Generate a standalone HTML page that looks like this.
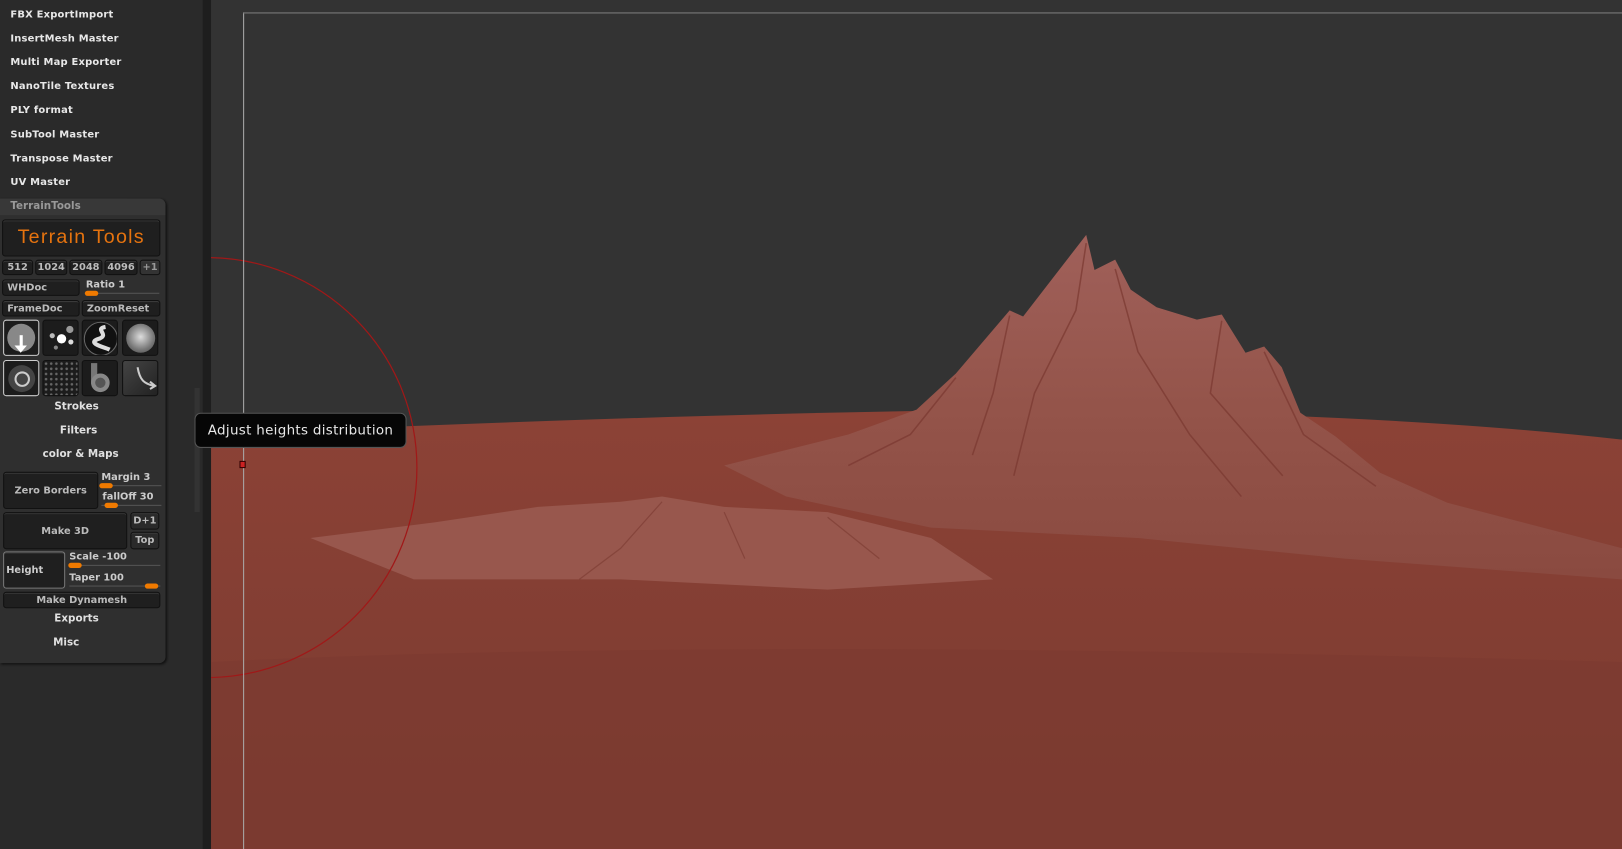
<!DOCTYPE html><html><head><style>
body{margin:0;width:1622px;height:849px;overflow:hidden;background:#2a2a2a;font-family:"DejaVu Sans","Liberation Sans",sans-serif}
#w{position:absolute;left:0;top:0;width:1568px;height:821px;transform:scale(1.0345);transform-origin:0 0}
.m{position:absolute;left:10px;color:#e8e8e8;font-size:9.6px;font-weight:bold;letter-spacing:.2px}
.b{position:absolute;background:#1f1f1f;border:1px solid #111;border-radius:3px;color:#bbb;font-size:9.5px;font-weight:bold;box-sizing:border-box;display:flex;align-items:center;justify-content:center;box-shadow:inset 0 1px 0 #3a3a3a}
.t{position:absolute;color:#e0e0e0;font-size:10px;font-weight:bold;text-align:center}
.sl{position:absolute;color:#ccc;font-size:9.5px;font-weight:bold}
.ln{position:absolute;height:1px;background:#555}
.kn{position:absolute;width:13px;height:5px;border-radius:3px;background:#f07a00}
.ic{position:absolute;width:35px;height:35px;background:#1c1c1c;border:1px solid #111;border-radius:3px;box-sizing:border-box;overflow:hidden}
</style></head><body><div id="w">
<div class="m" style="top:9px">FBX ExportImport</div>
<div class="m" style="top:32px">InsertMesh Master</div>
<div class="m" style="top:55px">Multi Map Exporter</div>
<div class="m" style="top:78px">NanoTile Textures</div>
<div class="m" style="top:101px">PLY format</div>
<div class="m" style="top:125px">SubTool Master</div>
<div class="m" style="top:148px">Transpose Master</div>
<div class="m" style="top:171px">UV Master</div>
<div style="position:absolute;left:0;top:192px;width:160px;height:449px;background:#2f2f2f;border-radius:0 6px 6px 0;box-shadow:1px 1px 2px #111"></div>
<div style="position:absolute;left:0;top:192px;width:160px;height:16px;background:#383838;border-radius:0 6px 0 0"></div>
<div style="position:absolute;left:10px;top:194px;color:#999;font-size:10px;font-weight:bold">TerrainTools</div>
<div class="b" style="left:2px;top:212px;width:153px;height:36px;font-size:19px;font-weight:normal;color:#e5730f;font-family:'Liberation Sans',sans-serif;letter-spacing:1.2px">Terrain Tools</div>
<div class="b" style="left:2px;top:251px;width:30px;height:15px">512</div>
<div class="b" style="left:34px;top:251px;width:31px;height:15px">1024</div>
<div class="b" style="left:67px;top:251px;width:32px;height:15px">2048</div>
<div class="b" style="left:101px;top:251px;width:32px;height:15px">4096</div>
<div class="b" style="left:135px;top:251px;width:20px;height:15px;background:#333;color:#999">+1</div>
<div class="b" style="left:2px;top:270px;width:75px;height:16px;justify-content:flex-start;padding-left:4px">WHDoc</div>
<div class="sl" style="left:83px;top:270px">Ratio 1</div><div class="ln" style="left:82px;top:283px;width:72px"></div><div class="kn" style="left:82px;top:281px"></div>
<div class="b" style="left:2px;top:290px;width:75px;height:16px;justify-content:flex-start;padding-left:4px">FrameDoc</div>
<div class="b" style="left:79px;top:290px;width:76px;height:16px;justify-content:flex-start;padding-left:4px">ZoomReset</div>
<div class="ic" style="left:3px;top:309px;border:1px solid #ccc"><div style="position:absolute;left:3px;top:3px;width:27px;height:27px;border-radius:50%;background:#888"></div><div style="position:absolute;left:15px;top:14px;width:3px;height:14px;background:#fff"></div><div style="position:absolute;left:10px;top:24px;border:6px solid transparent;border-top:7px solid #fff"></div></div>
<div class="ic" style="left:41px;top:309px"><div style="position:absolute;left:13px;top:13px;width:9px;height:9px;border-radius:50%;background:#fff"></div><div style="position:absolute;left:6px;top:12px;width:5px;height:5px;border-radius:50%;background:#bbb"></div><div style="position:absolute;left:22px;top:5px;width:7px;height:7px;border-radius:50%;background:#999"></div><div style="position:absolute;left:24px;top:18px;width:5px;height:5px;border-radius:50%;background:#ddd"></div><div style="position:absolute;left:10px;top:24px;width:4px;height:4px;border-radius:50%;background:#888"></div></div>
<div class="ic" style="left:79px;top:309px"><div style="position:absolute;left:1px;top:1px;width:31px;height:31px;border-radius:50%;background:#111;border:1px solid #666"></div><svg style="position:absolute;left:0;top:0" width="35" height="35"><path d="M22 6 C10 8 28 14 14 18 C4 22 22 26 26 28" stroke="#ddd" stroke-width="4" fill="none"/></svg></div>
<div class="ic" style="left:118px;top:309px"><div style="position:absolute;left:3px;top:3px;width:28px;height:28px;border-radius:50%;background:radial-gradient(circle at 50% 45%,#ddd,#777 60%,#444)"></div></div>
<div class="ic" style="left:3px;top:348px;border:1px solid #ccc"><div style="position:absolute;left:4px;top:4px;width:26px;height:26px;border-radius:50%;background:#444"></div><div style="position:absolute;left:10px;top:10px;width:11px;height:11px;border-radius:50%;border:2px solid #ccc"></div></div>
<div class="ic" style="left:41px;top:348px;background:radial-gradient(circle,#666 1px,transparent 1.5px) 0 0/5px 5px #1c1c1c"></div>
<div class="ic" style="left:79px;top:348px"><div style="position:absolute;left:8px;top:2px;width:6px;height:20px;background:#777"></div><div style="position:absolute;left:8px;top:12px;width:18px;height:18px;border-radius:50%;border:4px solid #888;box-sizing:border-box;background:#555"></div></div>
<div class="ic" style="left:118px;top:348px;background:linear-gradient(135deg,#444,#222)"><svg width="35" height="35"><path d="M14 6 C16 18 20 22 30 24" stroke="#ccc" stroke-width="2" fill="none"/><path d="M26 20 L31 24 L26 27" stroke="#ccc" stroke-width="2" fill="none"/></svg></div>
<div class="t" style="left:0;width:148px;top:388px">Strokes</div>
<div class="t" style="left:0;width:152px;top:411px">Filters</div>
<div class="t" style="left:0;width:156px;top:434px">color &amp; Maps</div>
<div class="b" style="left:3px;top:456px;width:92px;height:36px">Zero Borders</div>
<div class="sl" style="left:98px;top:456px">Margin 3</div><div class="ln" style="left:98px;top:469px;width:58px"></div><div class="kn" style="left:96px;top:467px"></div>
<div class="sl" style="left:99px;top:475px">fallOff 30</div><div class="ln" style="left:98px;top:488px;width:58px"></div><div class="kn" style="left:101px;top:486px"></div>
<div class="b" style="left:3px;top:495px;width:120px;height:36px">Make 3D</div>
<div class="b" style="left:126px;top:495px;width:28px;height:17px;background:#2a2a2a">D+1</div>
<div class="b" style="left:126px;top:514px;width:28px;height:17px;background:#2a2a2a">Top</div>
<div class="b" style="left:3px;top:533px;width:60px;height:36px;border:1px solid #777;justify-content:flex-start;padding-left:2px;color:#ccc">Height</div>
<div class="sl" style="left:67px;top:533px">Scale -100</div><div class="ln" style="left:67px;top:546px;width:88px"></div><div class="kn" style="left:66px;top:544px"></div>
<div class="sl" style="left:67px;top:553px">Taper 100</div><div class="ln" style="left:67px;top:566px;width:88px"></div><div class="kn" style="left:140px;top:564px"></div>
<div class="b" style="left:3px;top:572px;width:152px;height:16px">Make Dynamesh</div>
<div class="t" style="left:0;width:148px;top:593px">Exports</div>
<div class="t" style="left:0;width:128px;top:616px">Misc</div>
<div style="position:absolute;left:196px;top:0;width:8px;height:821px;background:#1e1e1e"></div>
<div style="position:absolute;left:188px;top:375px;width:5px;height:120px;background:#333"></div>
<svg style="position:absolute;left:204px;top:0" width="1364" height="821" viewBox="204 0 1364 821">
<defs><linearGradient id="g" x1="0" y1="0" x2="0" y2="1"><stop offset="0" stop-color="#8c4236"/><stop offset="1" stop-color="#7a3a30"/></linearGradient>
<linearGradient id="mt" x1="0" y1="0" x2="0" y2="1"><stop offset="0" stop-color="#a0605a"/><stop offset=".5" stop-color="#94544a"/><stop offset="1" stop-color="#8a4a40"/></linearGradient></defs>
<rect x="204" width="1364" height="821" fill="#333"/>
<path d="M204 420 Q700 398 1000 396 Q1350 400 1568 425 L1568 821 L204 821Z" fill="url(#g)"/>
<path d="M700 450 L820 420 L886 396 L924 361 L976 300 L989 306 L1050 227 L1058 261 L1078 251 L1093 280 L1118 297 L1157 309 L1181 304 L1204 341 L1222 335 L1239 355 L1257 399 L1291 422 L1334 457 L1399 486 L1568 530 L1568 560 L1300 540 L1100 520 L900 510 L760 480Z" fill="url(#mt)"/>
<g stroke="#7a3830" stroke-width="1.5" fill="none" opacity=".7">
<path d="M1050 235 L1040 300 L1000 380 L980 460"/><path d="M1078 260 L1100 340 L1150 420 L1200 480"/><path d="M976 305 L960 380 L940 440"/><path d="M1181 310 L1170 380 L1240 460"/><path d="M1222 340 L1260 420 L1330 470"/><path d="M924 365 L880 420 L820 450"/></g>
<path d="M300 520 L420 505 L520 490 L600 485 L640 480 L700 490 L800 495 L900 520 L960 560 L800 570 L600 560 L400 560Z" fill="#98574d"/>
<g stroke="#7a3830" stroke-width="1.2" fill="none" opacity=".6"><path d="M640 485 L600 530 L560 560"/><path d="M700 495 L720 540"/><path d="M800 500 L850 540"/></g>
<path d="M204 640 Q700 615 1568 640 L1568 821 L204 821Z" fill="#7c3b31" opacity=".6"/>
<circle cx="200" cy="452" r="203" fill="none" stroke="#a01818" stroke-width="1.2"/>
<line x1="235.5" y1="12" x2="235.5" y2="821" stroke="#aaa" stroke-width="1"/>
<line x1="235" y1="12.5" x2="1568" y2="12.5" stroke="#777" stroke-width="1"/>
<rect x="232" y="446" width="5" height="6" fill="#c22" stroke="#300"/>
</svg>
<div style="position:absolute;left:188px;top:399px;width:205px;height:34px;box-sizing:border-box;background:#060606;border:1px solid #555;border-radius:6px;color:#e8e8e8;font-size:13px;display:flex;align-items:center;justify-content:center;letter-spacing:.3px">Adjust heights distribution</div>
</div></body></html>
